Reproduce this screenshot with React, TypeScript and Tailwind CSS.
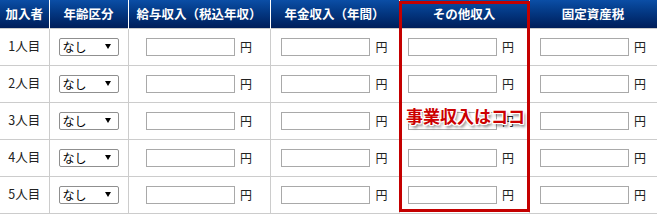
const ROWS = ["1人目", "2人目", "3人目", "4人目", "5人目"];
const HEADERS = ["加入者", "年齢区分", "給与収入（税込年収）", "年金収入（年間）", "その他収入", "固定資産税"];

function FakeSelect() {
  return (
    <div className="mx-auto flex h-[18px] w-[60px] items-center justify-between rounded-[2px] border border-[#8f8f8f] bg-white pl-[3px] pr-[7px] text-[12px] leading-none text-black">
      <span>なし</span>
      <span className="h-0 w-0 border-x-[3px] border-t-[5px] border-x-transparent border-t-black" />
    </div>
  );
}

function YenInput() {
  return (
    <div className="flex items-center justify-center gap-[5px]">
      <input
        type="text"
        className="h-[18px] w-[89px] border border-[#a9a9a9] bg-white px-1 text-[12px] outline-none"
      />
      <span className="text-[12px] text-[#222]">円</span>
    </div>
  );
}

export default function App() {
  return (
    <div className="relative h-[214px] w-[657px] overflow-hidden bg-white font-['Noto_Sans_CJK_JP',sans-serif]">
      <table className="w-[657px] table-fixed border-collapse">
        <colgroup>
          <col className="w-[49px]" />
          <col className="w-[79px]" />
          <col className="w-[142px]" />
          <col className="w-[129px]" />
          <col className="w-[130px]" />
          <col className="w-[128px]" />
        </colgroup>
        <thead>
          <tr className="h-[28px] bg-gradient-to-b from-[#0b4ea6] to-[#001e5a]">
            {HEADERS.map((h) => (
              <th
                key={h}
                className="border-x border-white p-0 text-center text-[12.5px] font-bold leading-none text-white first:border-l-0"
              >
                {h}
              </th>
            ))}
          </tr>
        </thead>
        <tbody>
          {ROWS.map((r) => (
            <tr key={r} className="h-[37px]">
              <td className="border border-[#cccccc] border-l-0 p-0 text-center text-[12.5px] text-[#222]">{r}</td>
              <td className="border border-[#cccccc] p-0">
                <FakeSelect />
              </td>
              <td className="border border-[#cccccc] p-0">
                <YenInput />
              </td>
              <td className="border border-[#cccccc] p-0">
                <YenInput />
              </td>
              <td className="border border-[#cccccc] p-0">
                <div className="pr-[6px]">
                  <YenInput />
                </div>
              </td>
              <td className="border border-[#cccccc] p-0">
                <YenInput />
              </td>
            </tr>
          ))}
        </tbody>
      </table>

      {/* highlight frame over the その他収入 column */}
      <div className="pointer-events-none absolute left-[399px] top-[1px] h-[211px] w-[131px] border-[3px] border-[#c40000]" />
      <div className="pointer-events-none absolute left-[406px] top-[104px] text-[17px] font-bold leading-[24px] text-[#cc0000] [text-shadow:1px_1px_0_#fff,-1px_-1px_0_#fff,1px_-1px_0_#fff,-1px_1px_0_#fff,0_1px_0_#fff,0_-1px_0_#fff,1px_0_0_#fff,-1px_0_0_#fff,2px_3px_3px_rgba(0,0,0,0.5)]">
        事業収入はココ
      </div>
    </div>
  );
}
